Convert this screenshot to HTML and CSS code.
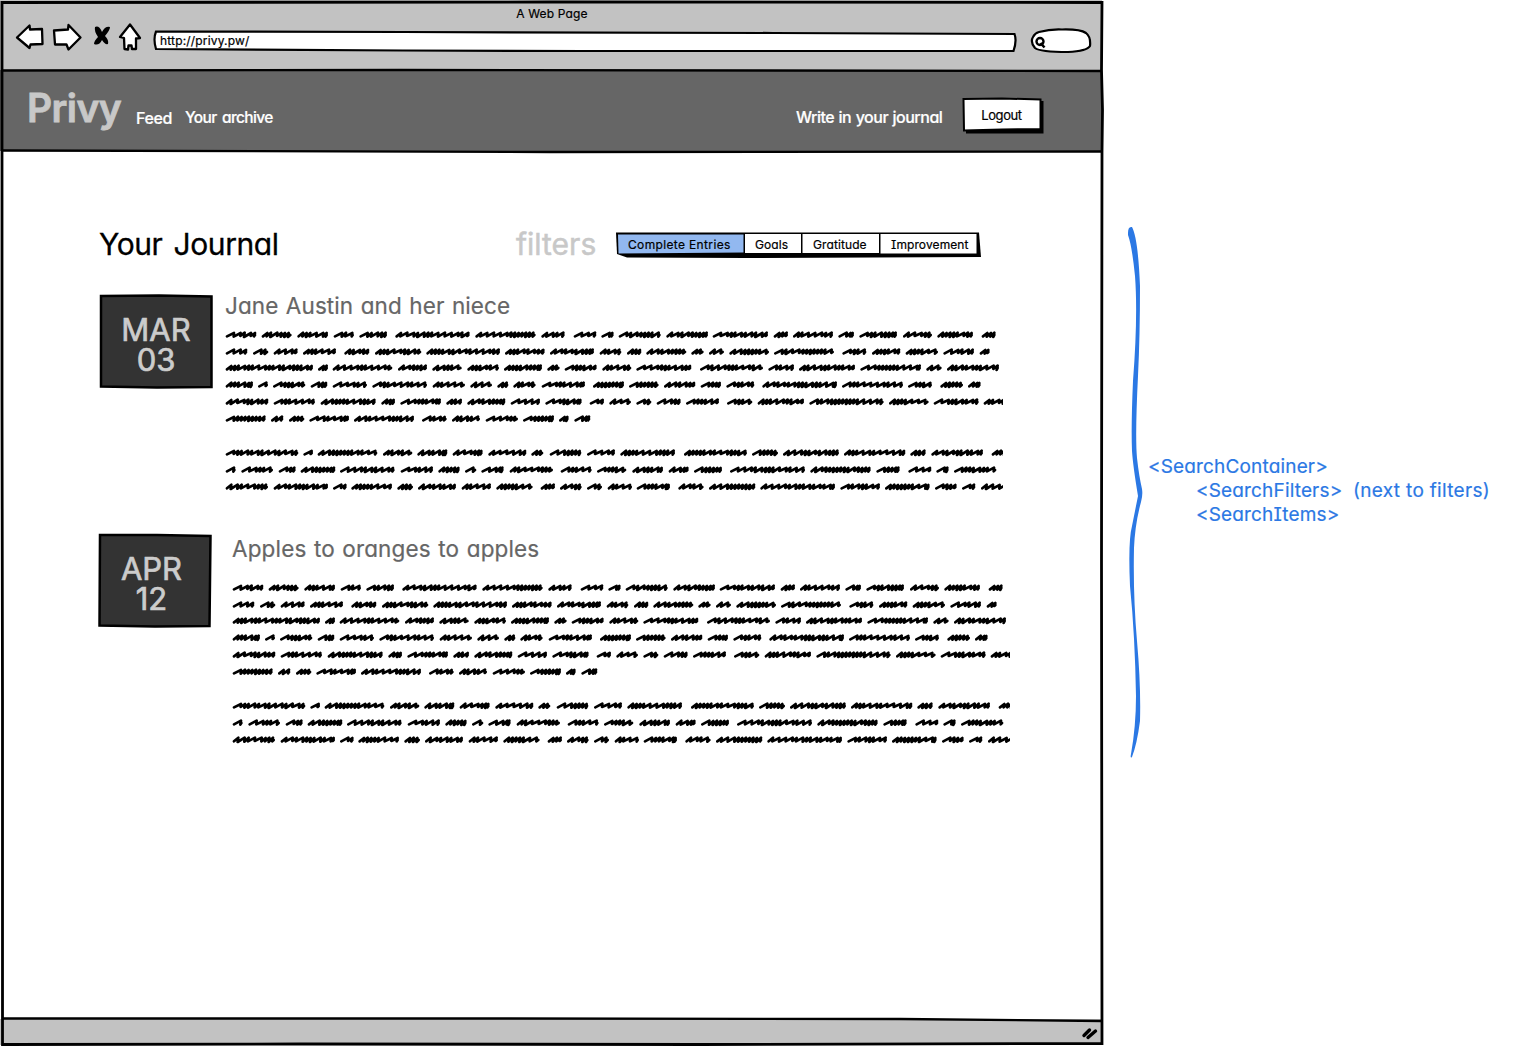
FILE: index.html
```html
<!DOCTYPE html>
<html lang="en">
<head>
<meta charset="utf-8">
<title>Privy – Your Journal</title>
<link rel="stylesheet" href="styles.css">
</head>
<body>
<div class="board">
  <div class="browser">
    <header class="chrome">
      <div class="page-title"><span class="t-title">A Web Page</span></div>
      <div class="toolbar">
        <svg class="nav-icons" width="130" height="32" viewBox="12 22 130 32">
          <g fill="#fff" stroke="#000" stroke-width="2.3" stroke-linejoin="round">
            <path d="M17 37.500L29.500 25.500L30 29.500L42 29L42.500 44L30.500 44.500L29.500 48Z"/>
            <path d="M54 30.500L68 29.500L68.500 25L80.500 37.500L68.500 49.500L66.500 44.500L55 44.500Z"/>
            <path d="M130 24.500L120 37L124 38L124.500 49L128 49.500L128.500 45.500L131.500 45.500L132 49L136 49L136 38.500L140 38Z"/>
          </g>
          <path d="M95 27Q99 25 102 32Q105 26 110 27Q110 30 105 36Q109 40 108 44Q105 45 102 40Q99 46 94 44Q94 41 98 37Q94 31 95 27Z"/>
        </svg>
        <div class="address">
          <svg class="sketch" viewBox="0 0 864 22"><path d="M3 1.500L250 2L620 3L861.500 4Q864 11 860.500 21L430 21L250 20.500L3 19Q0 9 3 1.500Z" fill="#fff" stroke="#000" stroke-width="2.200"/></svg>
          <span class="t-url">http://privy.pw/</span>
        </div>
        <svg class="search" width="62" height="26" viewBox="0 0 62 26">
          <path d="M9 4Q20 1 32 1.500Q50 1 56 5Q61 9 60 18Q57 23 38 24Q10 24 5 20Q0 14 3 9Q5 5 9 4Z" fill="#fff" stroke="#000" stroke-width="2.200"/>
          <circle cx="10" cy="13.500" r="3.500" fill="none" stroke="#000" stroke-width="2.400"/><path d="M10.500 15L14.500 19.500" stroke="#000" stroke-width="2.600"/>
        </svg>
      </div>
    </header>

    <nav class="navbar">
      <div class="nav-left">
        <span class="t-logo">Privy</span>
        <a class="t-feed">Feed</a>
        <a class="t-archive">Your archive</a>
      </div>
      <div class="nav-right">
        <a class="t-write">Write in your journal</a>
        <button class="logout">
          <svg class="sketch" viewBox="0 0 82 37"><path d="M4 4H81.500V36.500H4Z"/><path d="M1.500 2L40 1.500L78.500 2.500L78.500 32L40 32.500L2 33.500Z" fill="#fff" stroke="#000" stroke-width="2"/></svg>
          <span class="t-logout">Logout</span>
        </button>
      </div>
    </nav>

    <main class="content">
      <div class="heading">
        <h1 class="t-h1">Your Journal</h1>
        <span class="t-filters">filters</span>
        <div class="tabs">
          <svg class="sketch" viewBox="0 0 366 28">
            <path d="M0 0.500L363 0.500L365 25L130 26L11 25.500L1 22Z"/>
            <path d="M2 2.500H127.500V20.500L2.500 21.500Z" fill="#92b8f0"/>
            <path d="M129 2H185V21H129ZM186.500 2H263V21H186.500ZM264.500 2H360.500V21.500H264.500Z" fill="#fff"/>
          </svg>
          <span class="tab tab-entries">Complete Entries</span>
          <span class="tab tab-goals">Goals</span>
          <span class="tab tab-gratitude">Gratitude</span>
          <span class="tab tab-improvement">Improvement</span>
        </div>
      </div>

      <article class="entry">
        <div class="date">
          <svg class="sketch" viewBox="0 0 116 96"><path d="M2 3L60 2.500L112.500 3.500L112.500 94L58 94.500L2 93.500Z" fill="#333" stroke="#000" stroke-width="2.500"/></svg>
          <span class="t-mar">MAR</span><span class="t-03">03</span>
        </div>
        <div class="story">
          <h2 class="t-jane">Jane Austin and her niece</h2>
          <svg class="scribble" width="778" height="172" viewBox="0 0 2334 516"></svg>
        </div>
      </article>

      <article class="entry entry-apples">
        <div class="date">
          <svg class="sketch" viewBox="0 0 116 96"><path d="M3 3L60 3L113.500 4L112.500 94L58 94.500L2.500 93.500Z" fill="#333" stroke="#000" stroke-width="2.500"/></svg>
          <span class="t-apr">APR</span><span class="t-12">12</span>
        </div>
        <div class="story">
          <h2 class="t-apples">Apples to oranges to apples</h2>
          <svg class="scribble" width="778" height="172" viewBox="0 0 2334 516"></svg>
        </div>
      </article>
    </main>

    <footer class="status">
      <svg width="20" height="16" viewBox="0 0 20 16"><path d="M4 10.500L9.500 5M8 12.500L15.500 6" stroke="#000" stroke-width="3.400" stroke-linecap="round"/></svg>
    </footer>

    <svg class="frame" viewBox="0 0 1106 1046" fill="none" stroke="#000" stroke-width="2.800">
      <path d="M2 2.500L550 2L1102 2.500L1101.500 70L1102.500 110L1102 152L1101.500 560L1102 1043.500L700 1044.500L300 1044L2.500 1044.500L2.500 700L2 400Z"/>
      <path d="M2 70.500L400 70L1102 71M2 150.500L550 152L1102 151.500M2 1018.500L500 1018.500L900 1019L1102 1021" stroke-width="2.300"/>
    </svg>
  </div>

  <aside class="notes">
    <svg class="brace" width="20" height="534" viewBox="0 0 20 534" fill="#2b78e4">
      <path d="M1 7Q1 0 5 1Q11 12 13 60Q13 110 11 150Q8 210 10 232Q12 250 15 263Q16 269 14 276Q8 298 7 322Q6 370 10 415Q14 460 13 495Q10 518 5 531Q3 533 4 528Q9 500 9 470Q8 410 3 360Q1 315 5 300Q9 280 11 270Q6 240 5 225Q4 200 6 155Q11 90 8 50Q5 20 1 9Z"/>
    </svg>
    <div class="components">
      <span class="t-container">&lt;SearchContainer&gt;</span>
      <div class="indent"><span class="t-sf">&lt;SearchFilters&gt;</span><span class="t-next">(next to filters)</span></div>
      <div class="indent"><span class="t-items">&lt;SearchItems&gt;</span></div>
    </div>
  </aside>
</div>
<script src="scribble.js"></script>
</body>
</html>
```
FILE: styles.css
```css
* { box-sizing: border-box; }
body {
  margin: 0;
  background: #fff;
  color: #000;
  font-family: Inter, "Liberation Sans", sans-serif;
  font-feature-settings: "cv11", "cv08";
  font-size: 12px;
  line-height: 1;
  -webkit-text-stroke: .2px;
}
h1, h2 { margin: 0; font-weight: 400; }
span, a, h1, h2 { white-space: pre; }
.board { display: flex; width: 1525px; height: 1046px; overflow: hidden; }
.browser { position: relative; display: flex; flex-direction: column; width: 1106px; height: 1046px; }
.frame { position: absolute; left: 0; top: 0; width: 1106px; height: 1046px; pointer-events: none; }
.sketch { position: absolute; left: 0; top: 0; width: 100%; height: 100%; z-index: -1; }

.chrome { height: 70px; width: 1102px; padding: 8px 0 0 2px; background: #c2c2c2; }
.page-title { display: flex; justify-content: center; height: 12px; }
.t-title { letter-spacing: .15px; }
.toolbar { display: flex; align-items: flex-start; padding-left: 10px; }
.nav-icons { margin-top: 2px; }
.address { position: relative; z-index: 0; width: 864px; height: 22px; margin: 10px 0 0 11px; padding: 5px 0 0 7px; }
.t-url { letter-spacing: .17px; }
.search { margin: 8px 0 0 13px; }

.navbar { display: flex; justify-content: space-between; width: 1102px; height: 81px; background: #666; color: #fff; }
.nav-left { display: flex; padding-left: 27px; }
.t-logo { width: 109px; padding-top: 18px; font-size: 39px; font-weight: 600; letter-spacing: -.6px; color: #c8c8c8; -webkit-text-stroke: .8px; }
.t-feed { width: 49px; padding-top: 40px; font-size: 16px; font-weight: 500; letter-spacing: -.4px; }
.t-archive { padding-top: 40px; font-size: 15.5px; font-weight: 500; letter-spacing: -.65px; word-spacing: 2px; }
.nav-right { display: flex; padding-right: 58px; }
.t-write { width: 166px; padding-top: 39px; font-size: 16px; font-weight: 500; letter-spacing: -.5px; word-spacing: .7px; }
.logout { position: relative; z-index: 0; width: 82px; height: 37px; margin: 27px 0 0; padding: 0 3px 0 0; border: 0; background: none; color: #000; font: inherit; font-size: 13px; font-feature-settings: inherit; }
.t-logout { letter-spacing: -.4px; }

.content { flex: 1; padding: 78px 0 0 98px; }
.heading { display: flex; height: 63px; }
.t-h1 { width: 417px; margin-left: 1px; font-size: 30px; letter-spacing: -.4px; word-spacing: 3px; -webkit-text-stroke: .3px; }
.t-filters { width: 100px; font-size: 30px; color: #c8c8c8; -webkit-text-stroke: .5px; }
.tabs { position: relative; z-index: 0; display: flex; width: 366px; height: 28px; margin-top: 3px; }
.tab { padding-top: 7px; }
.tab-entries { width: 128px; padding-left: 12px; letter-spacing: .35px; }
.tab-goals { width: 58px; padding-left: 11px; letter-spacing: .1px; }
.tab-gratitude { width: 78px; padding-left: 11px; letter-spacing: .1px; }
.tab-improvement { padding-left: 11px; letter-spacing: .1px; }

.entry { display: flex; height: 239px; padding-left: 1px; }
.entry-apples { padding-left: 0; margin-left: -1px; }
.date { position: relative; z-index: 0; display: flex; flex-direction: column; align-items: center; width: 116px; height: 96px; margin-top: 1px; padding: 22px 2px 0 0; color: #ccc; font-size: 31px; line-height: 30px; -webkit-text-stroke: .7px; }
.entry-apples .date { padding-right: 7px; }
.story { padding: 3px 0 0 10px; }
.entry-apples .story { padding: 7px 0 0 19px; }
.t-jane, .t-apples { height: 31px; font-size: 22.5px; letter-spacing: .1px; word-spacing: 1px; color: #666; }
.t-apples { height: 41px; letter-spacing: .15px; }
.scribble { display: block; }

.status { display: flex; justify-content: flex-end; width: 1102px; height: 26px; margin-bottom: 1px; padding: 6px 2px 0 0; background: #c2c2c2; }

.notes { display: flex; color: #2b78e4; font-size: 19px; padding-left: 21px; }
.brace { margin-top: 226px; }
.components { display: flex; flex-direction: column; padding: 455px 0 0 1px; line-height: 24px; letter-spacing: .16px; }
.indent { display: flex; padding-left: 48px; }
.t-sf { width: 157px; }
.t-next { letter-spacing: .32px; }
```
FILE: scribble.js
```js
// Word extents of each line, in thirds of a pixel, with the line's vertical centre.
const lines = [
  [45, "16-110,124-216,231-325,340-403,417-502,525-750,765-948,963-1035,1060-1130,1143-1182,1195-1323,1338-1465,1477-1645,1660-1705,1718-1840,1854-1903,1917-2032,2048-2137,2151-2260,2284-2328"],
  [96, "16-83,98-146,160-234,248-349,372-449,464-605,618-841,854-975,989-1123,1138-1205,1220-1265,1278-1400,1413-1452,1466-1513,1527-1648,1661-1843,1866-1940,1955-2042,2056-2155,2169-2263,2278-2310"],
  [144, "16-280,293-325,337-518,533-622,636-726,741-838,851-967,981-1020,1033-1131,1146-1235,1248-1415,1439-1630,1644-1723,1736-1906,1920-2104,2118-2166,2180-2338"],
  [195, "16-100,113-145,158-257,271-323,337-442,456-622,637-736,750-817,831-866,879-948,964-1096,1118-1213,1226-1317,1331-1427,1441-1504,1518-1604,1626-1852,1865-2050,2063-2137,2160-2230,2243-2283"],
  [246, "16-146,160-286,301-468,483-526,540-664,678-727,741-857,871-961,975-1086,1108-1153,1167-1234,1248-1295,1309-1383,1397-1498,1520-1598,1612-1753,1767-1992,2006-2127,2140-2277,2290-2375"],
  [297, "16-138,152-191,206-254,267-388,401-583,605-681,695-781,796-895,908-1003,1016-1047,1062-1112"],
  [399, "16-236,249-280,292-473,488-578,591-683,697-789,804-920,933-971,988-1085,1100-1186,1200-1366,1391-1582,1595-1675,1688-1858,1871-2057,2070-2118,2133-2290,2314-2375"],
  [450, "16-48,63-160,175-228,241-347,359-525,541-640,654-720,734-770,783-852,868-1000,1021-1116,1130-1220,1236-1330,1345-1407,1421-1507,1529-1756,1770-1953,1968-2040,2064-2135,2148-2187,2201-2330"],
  [501, "16-145,160-325,338-381,393-517,531-580,593-709,724-814,828-939,961-1006,1019-1086,1100-1147,1162-1237,1249-1351,1374-1452,1466-1607,1620-1846,1860-1981,1994-2130,2144-2211,2225-2267,2282-2375"]
];

// A word is a run of slanted pen strokes: some lean far over, some are packed tight.
function word(x0, x1, y, seed) {
  const left = x0 + 5, right = x1 - 5;
  let d = `M${left} ${y + 5}`;
  let x = left;
  while (x < right - 7) {
    seed = (seed * 73 + 41) % 997;
    const wide = seed % 5 < 2;
    const top = Math.min(x + (wide ? 21 : 13), right);
    const next = Math.min(x + (wide ? 20 : 11), right - 3);
    d += `L${top} ${y - 5 - seed % 2}L${next} ${y + (wide ? 4 : 5) + seed % 3}`;
    x = next;
  }
  return d + `L${right} ${y + 1}`;
}

document.querySelectorAll(".scribble").forEach(svg => {
  let d = "";
  lines.forEach(([y, text]) => {
    text.split(",").forEach(pair => {
      const [a, b] = pair.split("-").map(Number);
      d += word(a - 15, b - 15, y - 19, a + y);
    });
  });
  const path = document.createElementNS("http://www.w3.org/2000/svg", "path");
  path.setAttribute("d", d);
  path.setAttribute("fill", "none");
  path.setAttribute("stroke", "#000");
  path.setAttribute("stroke-width", "8");
  path.setAttribute("stroke-linejoin", "round");
  path.setAttribute("stroke-linecap", "round");
  svg.append(path);
});
```
